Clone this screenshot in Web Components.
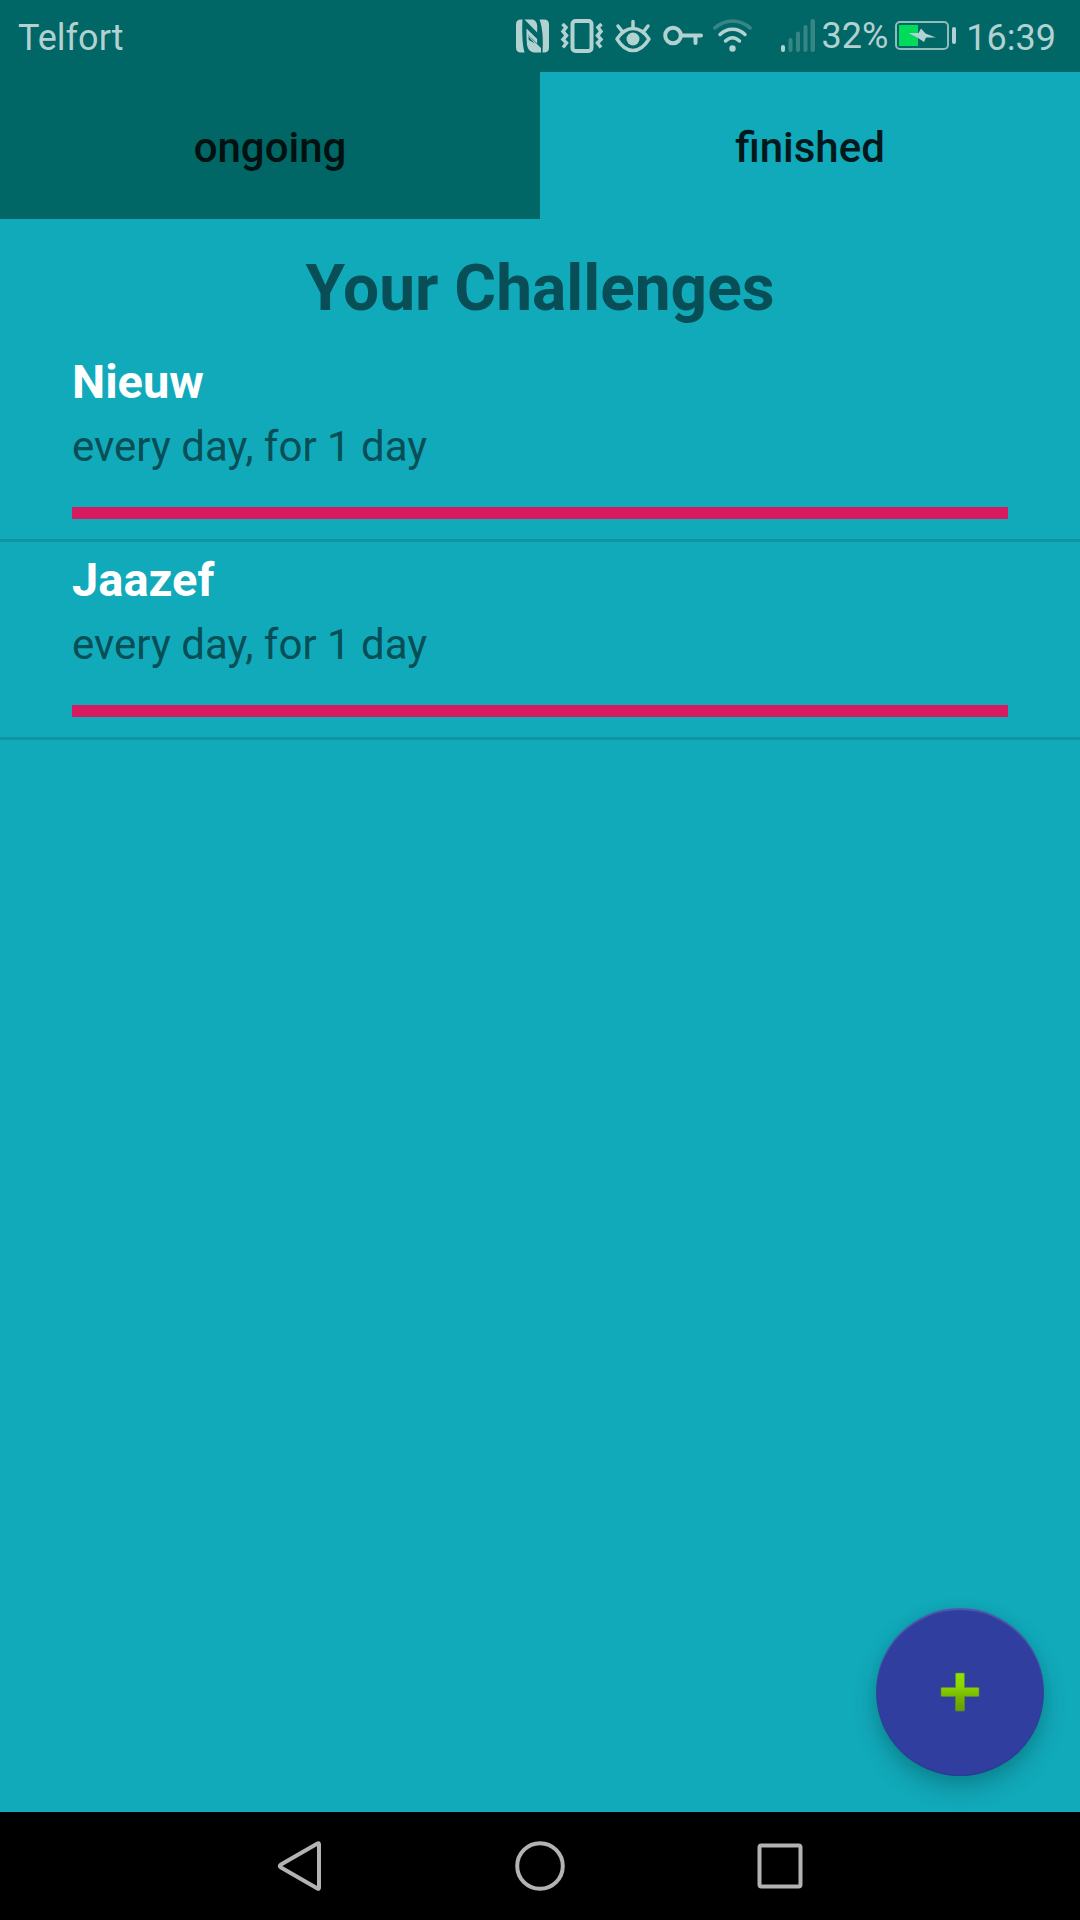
<!DOCTYPE html>
<html lang="en">
<head>
<meta charset="utf-8">
<meta name="viewport" content="width=device-width, initial-scale=1">
<title>Your Challenges</title>
<style>
  html, body { margin: 0; }
  body { font-family: Roboto, "Noto Sans", sans-serif; background: #11aabb; }
</style>
</head>
<body>
<challenge-app>
  <status-bar slot="status" carrier="Telfort" battery="32%" time="16:39"></status-bar>
  <tab-bar slot="tabs">
    <tab-button>ongoing</tab-button>
    <tab-button selected>finished</tab-button>
  </tab-bar>
  <challenge-list heading="Your Challenges">
    <challenge-item name="Nieuw" value="100">every day, for 1 day</challenge-item>
    <challenge-item name="Jaazef" value="100">every day, for 1 day</challenge-item>
  </challenge-list>
  <add-button slot="action"></add-button>
  <nav-bar slot="nav"></nav-bar>
</challenge-app>

<script>
class BaseElement extends HTMLElement {
  connectedCallback() {
    if (!this.shadowRoot) {
      this.attachShadow({ mode: 'open' }).innerHTML = this.render();
    }
  }
  attr(name) { return this.getAttribute(name) || ''; }
}

customElements.define('challenge-app', class extends BaseElement {
  render() {
    return `
    <style>
      :host { display: flex; flex-direction: column; min-height: 100vh; background: #11aabb; }
      main { flex: 1; position: relative; }
      .action { position: absolute; right: 36px; bottom: 36px; }
    </style>
    <slot name="status"></slot>
    <slot name="tabs"></slot>
    <main>
      <slot></slot>
      <div class="action"><slot name="action"></slot></div>
    </main>
    <slot name="nav"></slot>`;
  }
});

customElements.define('status-bar', class extends BaseElement {
  render() {
    return `
    <style>
      :host { display: flex; align-items: center; justify-content: space-between; height: 72px;
              padding: 0 24px 0 18px; background: #006666; color: #b2d1d1;
              font-size: 36px; line-height: 42px; }
      .label { padding-top: 3px; }
      .system, .icons, .power { display: flex; align-items: center; }
      .icons { gap: 12px; }
      .power { gap: 7px; margin: 0 9px 0 29px; }
      svg { display: block; flex: none; overflow: visible; }
    </style>
    <span class="label">${this.attr('carrier')}</span>
    <div class="system">
      <div class="icons">
        <svg width="33" height="34" viewBox="0 0 33 34" fill="#b2d1d1" aria-hidden="true">
          <path d="M5 .5H6.500C6 10 6 24 8.500 33.500H5Q0 33.500 0 28.500V5.500Q0 .5 5 .5Z"/>
          <path d="M8.500 .5H17Q21 2 21.200 7V13.500Z"/>
          <path d="M10.500 9.500L21.200 20V24.500L12 15.500V16L25 29V33.500H17.500Q12 32 11 26Q10.300 18 10.500 9.500Z"/>
          <path d="M12.300 17.500L19 24.500L12.800 21Z" fill="#006666"/>
          <path d="M23.500 .5H28Q33 .5 33 5.500V28.500Q33 33.500 28 33.500H26.500C27.200 22 27 10 23.500 .5Z"/>
        </svg>
        <svg width="42" height="34" viewBox="0 0 42 34" fill="none" stroke="#b2d1d1" aria-hidden="true">
          <rect x="11.500" y="2" width="19" height="30" rx="3" stroke-width="4"/>
          <path d="M1.500 5L5 8.500L2 12.500L5.500 16.500L2 20.500L5.500 24L2 28.500M40.500 5L37 8.500L40 12.500L36.500 16.500L40 20.500L36.500 24L40 28.500" stroke-width="3.500"/>
        </svg>
        <svg width="36" height="34" viewBox="0 0 36 34" fill="none" stroke="#b2d1d1" stroke-width="3.500" stroke-linecap="round" stroke-linejoin="round" aria-hidden="true">
          <path d="M2 20Q9 9.500 18 9.500T34 20Q27 31.500 18 31.500T2 20Z"/>
          <circle cx="18" cy="20" r="6.500" fill="#b2d1d1" stroke="none"/>
          <path d="M18 2.500V9M3 7L6.500 11.500M33 7L29.500 11.500"/>
        </svg>
        <svg width="38" height="34" viewBox="0 0 38 34" fill="none" stroke="#b2d1d1" stroke-width="4" stroke-linecap="round" aria-hidden="true">
          <circle cx="10" cy="16.500" r="7.800"/>
          <path d="M18 16.500H38M32.500 17V24"/>
        </svg>
        <svg width="39" height="34" viewBox="0 0 39 34" fill="none" stroke="#b2d1d1" stroke-width="3.500" stroke-linecap="round" aria-hidden="true">
          <path d="M1.800 9C12 -.5 27 -.5 37.200 9" opacity=".3"/>
          <path d="M7 15.500C14 8.500 25 8.500 32 15.500M12.500 22C17 17.500 22 17.500 26.500 22"/>
          <circle cx="19.500" cy="29.500" r="3.200" fill="#b2d1d1" stroke="none"/>
        </svg>
      </div>
      <div class="power">
        <svg width="34" height="34" viewBox="0 0 34 34" fill="#b2d1d1" aria-hidden="true">
          <rect x="0" y="26" width="4" height="7" rx="2"/>
          <g opacity=".3">
            <rect x="7.500" y="19" width="4" height="14" rx="2"/>
            <rect x="15" y="12.500" width="4" height="20.500" rx="2"/>
            <rect x="22.500" y="6" width="4" height="27" rx="2"/>
            <rect x="29.500" y="0" width="4.500" height="33" rx="2"/>
          </g>
        </svg>
        <span>${this.attr('battery')}</span>
        <svg width="62" height="30" viewBox="0 0 62 30" aria-hidden="true">
          <rect x="1" y="1" width="52" height="27" rx="4" fill="none" stroke="#91bcbc" stroke-width="2"/>
          <rect x="4" y="4" width="19" height="21" fill="#00dc5a"/>
          <path d="M13.500 12H23.500L26 7.500L30.500 12.500L41 16.500H31L29 21L23 17Z" fill="#b2d1d1"/>
          <rect x="57" y="6" width="4" height="17" rx="2" fill="#b2d1d1"/>
        </svg>
      </div>
      <span class="label">${this.attr('time')}</span>
    </div>`;
  }
});

customElements.define('tab-bar', class extends BaseElement {
  render() {
    return `
    <style>
      :host { display: block; background: #11aabb; }
      div { display: grid; grid-auto-flow: column; grid-auto-columns: 1fr; }
    </style>
    <div role="tablist"><slot></slot></div>`;
  }
});

customElements.define('tab-button', class extends BaseElement {
  render() {
    const selected = this.hasAttribute('selected');
    return `
    <style>
      :host { display: block; }
      button { display: block; width: 100%; border: 0; padding: 51px 24px 46px; font: inherit;
               font-size: 42px; line-height: 50px; font-weight: 500;
               background: #006666; color: #00110f; }
      button[aria-selected="true"] { background: #11aabb; color: #02181a; }
    </style>
    <button type="button" role="tab" aria-selected="${selected}"><slot></slot></button>`;
  }
});

customElements.define('challenge-list', class extends BaseElement {
  render() {
    return `
    <style>
      :host { display: block; }
      h1 { margin: 0; padding: 32px 24px 17px; font-size: 64px; line-height: 76px;
           font-weight: 700; text-align: center; color: #084e56; }
    </style>
    <h1>${this.attr('heading')}</h1>
    <div role="list"><slot></slot></div>`;
  }
});

customElements.define('challenge-item', class extends BaseElement {
  render() {
    this.setAttribute('role', 'listitem');
    return `
    <style>
      :host { display: block; padding: 10px 72px 20px; border-bottom: 3px solid #0f96a5; }
      h2 { margin: 0 0 12px; font-size: 47px; line-height: 56px; font-weight: 700; color: #fff; }
      p { margin: 0 0 35px; font-size: 42px; line-height: 50px; color: #084e56; }
      progress { display: block; width: 100%; height: 12px; border: 0; appearance: none; background: #0f96a5; }
      progress::-webkit-progress-bar { background: #0f96a5; }
      progress::-webkit-progress-value { background: #d81b60; }
      progress::-moz-progress-bar { background: #d81b60; }
    </style>
    <h2 id="name">${this.attr('name')}</h2>
    <p><slot></slot></p>
    <progress aria-labelledby="name" max="100" value="${this.attr('value')}"></progress>`;
  }
});

customElements.define('add-button', class extends BaseElement {
  render() {
    return `
    <style>
      :host { display: block; }
      button { display: grid; place-items: center; width: 168px; height: 168px; padding: 0; border: 0;
               border-radius: 50%; background: #303f9f;
               box-shadow: inset 0 2px 1px rgba(255,255,255,.14), inset 0 -1px 1px rgba(0,0,0,.12),
                           0 12px 24px rgba(0,0,0,.22), 0 0 12px rgba(0,0,0,.06); }
      svg { display: block; }
    </style>
    <button type="button" aria-label="Add challenge">
      <svg width="40" height="40" viewBox="0 0 40 40" aria-hidden="true">
        <defs><linearGradient id="lime" x1="0" y1="0" x2="0" y2="1">
          <stop offset="0" stop-color="#92e000"/><stop offset=".35" stop-color="#8bd600"/>
          <stop offset=".65" stop-color="#76b400"/><stop offset="1" stop-color="#689d00"/>
        </linearGradient></defs>
        <path d="M16.500 1H23.500Q24.500 1 24.500 2V15.500H38Q39 15.500 39 16.500V23.500Q39 24.500 38 24.500H24.500V38Q24.500 39 23.500 39H16.500Q15.500 39 15.500 38V24.500H2Q1 24.500 1 23.500V16.500Q1 15.500 2 15.500H15.500V2Q15.500 1 16.500 1Z" fill="url(#lime)" stroke="#5b8c2a" stroke-opacity=".6"/>
      </svg>
    </button>`;
  }
});

customElements.define('nav-bar', class extends BaseElement {
  render() {
    return `
    <style>
      :host { display: block; background: #000; }
      nav { display: flex; justify-content: center; height: 108px; }
      button { display: grid; place-items: center; width: 240px; padding: 0; border: 0; background: none; }
      svg { display: block; fill: none; stroke: #b3b3b3; stroke-width: 4; stroke-linejoin: round; }
    </style>
    <nav aria-label="System">
      <button type="button" aria-label="Back"><svg width="50" height="50" viewBox="0 0 50 50"><path d="M42.500 2.500Q44 1.500 44 3.500V46.500Q44 48.500 42.500 47.500L6 26.500Q3.500 25 6 23.500Z"/></svg></button>
      <button type="button" aria-label="Home"><svg width="50" height="50" viewBox="0 0 50 50"><circle cx="25" cy="25" r="22.800"/></svg></button>
      <button type="button" aria-label="Recent apps"><svg width="50" height="50" viewBox="0 0 50 50"><rect x="4.500" y="4.500" width="41" height="41" rx="2"/></svg></button>
    </nav>`;
  }
});
</script>
</body>
</html>
